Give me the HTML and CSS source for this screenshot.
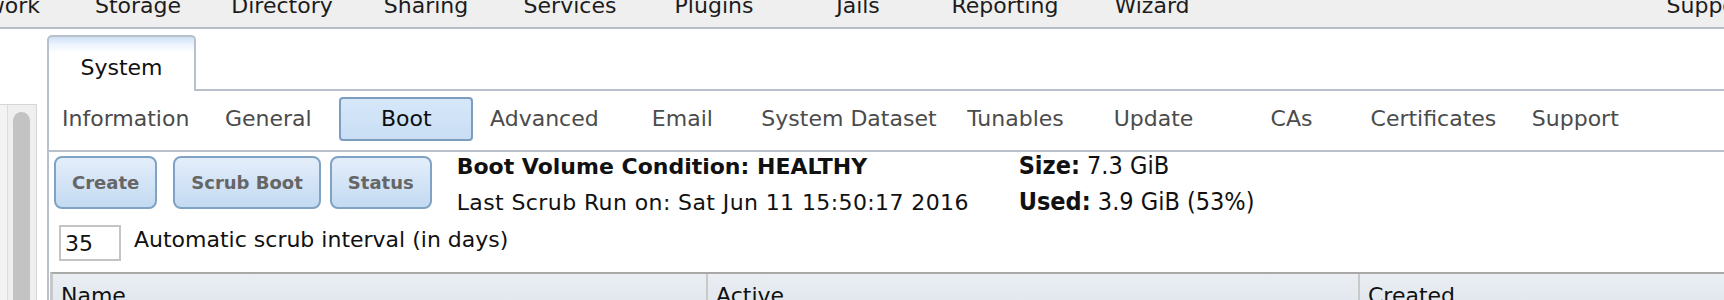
FILE: index.html
```html
<!DOCTYPE html>
<html>
<head>
<meta charset="utf-8">
<title>System - Boot</title>
<link rel="stylesheet" href="styles.css">
</head>
<body>
<div class="topnav">
  <div class="navitem">Network</div>
  <div class="navitem">Storage</div>
  <div class="navitem">Directory</div>
  <div class="navitem">Sharing</div>
  <div class="navitem">Services</div>
  <div class="navitem">Plugins</div>
  <div class="navitem">Jails</div>
  <div class="navitem wide">Reporting</div>
  <div class="navitem">Wizard</div>
  <div class="navitem navright">Support</div>
</div>
<div class="main">
  <div class="sidebar">
    <div class="track"><div class="thumb"></div></div>
  </div>
  <div class="panel">
    <div class="tabstrip">
      <div class="tab">System</div>
      <div class="tabfill"></div>
    </div>
    <div class="panelbody">
      <div class="subtabs">
        <div class="subtab">Information</div>
        <div class="subtab">General</div>
        <div class="subtab active">Boot</div>
        <div class="subtab">Advanced</div>
        <div class="subtab">Email</div>
        <div class="subtab">System Dataset</div>
        <div class="subtab">Tunables</div>
        <div class="subtab">Update</div>
        <div class="subtab">CAs</div>
        <div class="subtab">Certificates</div>
        <div class="subtab">Support</div>
      </div>
      <div class="actions">
        <button class="btn btn-create">Create</button>
        <button class="btn btn-scrub">Scrub Boot</button>
        <button class="btn btn-status">Status</button>
        <div class="info">
          <div class="info-strong">Boot Volume Condition: HEALTHY</div>
          <div class="info-line">Last Scrub Run on: Sat Jun 11 15:50:17 2016</div>
        </div>
        <div class="usage">
          <div><b>Size:</b> 7.3 GiB</div>
          <div><b>Used:</b> 3.9 GiB (53%)</div>
        </div>
      </div>
      <div class="scrubrow">
        <input class="days" type="text" value="35">
        <span class="scrublabel">Automatic scrub interval (in days)</span>
      </div>
      <div class="grid">
        <div class="cell">Name</div>
        <div class="cell">Active</div>
        <div class="cell last">Created</div>
      </div>
    </div>
  </div>
</div>
</body>
</html>
```
FILE: styles.css
```css
html, body {
  margin: 0;
  padding: 0;
  background: #ffffff;
  overflow: hidden;
}
body {
  font-family: "DejaVu Sans", Verdana, sans-serif;
  font-size: 22px;
  color: #111111;
  width: 1724px;
  height: 300px;
}

/* top navigation */
.topnav {
  display: flex;
  align-items: flex-start;
  height: 27px;
  overflow: hidden;
  background: #efefef;
  border-bottom: 2px solid #b6bdc7;
  margin-left: -78px;
  margin-right: -58px;
}
.navitem {
  flex: 0 0 144px;
  text-align: center;
  line-height: 27px;
  margin-top: -8px;
  color: #1c1c1c;
  white-space: nowrap;
}
.navitem.wide { flex-basis: 150px; }
.navitem.navright { margin-left: auto; }

/* main area */
.main {
  display: flex;
  height: 271px;
  overflow: hidden;
}
.sidebar {
  flex: 0 0 36px;
  margin-top: 75px;
  background: #f3f3f3;
  border-top: 1px solid #d6d6d6;
  border-right: 1px solid #d6d6d6;
  display: flex;
}
.track {
  margin-left: 7px;
  border-left: 1px solid #dcdcdc;
  padding-left: 5px;
  padding-top: 7px;
  background: #efefef;
  flex: 1;
  display: flex;
}
.thumb {
  width: 17px;
  background: #c3c3c3;
  border-radius: 9px 9px 0 0;
}

.panel {
  flex: 1;
  margin-left: 10px;
  margin-top: 6px;
  display: flex;
  flex-direction: column;
  min-width: 0;
}
.tabstrip {
  display: flex;
  height: 56px;
}
.tab {
  box-sizing: border-box;
  width: 149px;
  height: 56px;
  border: 2px solid #b8c0cb;
  border-bottom: none;
  border-radius: 5px 5px 0 0;
  background: linear-gradient(#cfe1f6 0px, #eef5fd 8px, #ffffff 16px);
  text-align: center;
  padding-top: 18px;
  line-height: 26px;
  color: #111111;
}
.tabfill {
  flex: 1;
  border-bottom: 2px solid #b8c0cb;
}
.panelbody {
  flex: 1;
  border-left: 2px solid #b8c0cb;
}

/* sub tabs */
.subtabs {
  box-sizing: border-box;
  height: 61px;
  padding-top: 6px;
  padding-left: 3px;
  display: flex;
  align-items: flex-start;
  border-bottom: 2px solid #b8c0cb;
}
.subtab {
  box-sizing: border-box;
  min-width: 134px;
  height: 44px;
  margin: 0 2px;
  padding: 0 6px;
  border: 2px solid transparent;
  border-radius: 4px;
  line-height: 40px;
  text-align: center;
  color: #4b4b4b;
  white-space: nowrap;
}
.subtab.active {
  border-color: #7d9dc0;
  background: linear-gradient(#d6e7f9, #c9def4);
  color: #0d0d0d;
}

/* action row */
.actions {
  box-sizing: border-box;
  height: 57px;
  display: flex;
  align-items: flex-start;
  padding-top: 4px;
}
.btn {
  box-sizing: border-box;
  height: 53px;
  padding: 0 16px;
  border: 2px solid #7fa2c5;
  border-radius: 8px;
  background: linear-gradient(#e4eefa, #c3daf2);
  font-family: "DejaVu Sans", Verdana, sans-serif;
  font-weight: bold;
  font-size: 18px;
  color: #666666;
  white-space: nowrap;
}
.btn-create { margin-left: 5px; }
.btn-scrub { margin-left: 16px; }
.btn-status { margin-left: 9px; }
.info {
  flex: 0 0 562px;
  margin-left: 25px;
  margin-top: -7px;
  line-height: 36px;
  color: #111111;
  white-space: nowrap;
}
.info-strong { font-weight: bold; }
.info-line { letter-spacing: 0.4px; }
.usage {
  font-family: "DejaVu Sans Condensed", "DejaVu Sans", sans-serif;
  font-stretch: condensed;
  font-size: 25px;
  line-height: 36px;
  margin-top: -8px;
  color: #111111;
  white-space: nowrap;
}

/* scrub interval */
.scrubrow {
  display: flex;
  align-items: flex-start;
  margin-top: 16px;
  padding-left: 10px;
}
.days {
  box-sizing: border-box;
  width: 62px;
  height: 36px;
  margin: 0;
  border: 2px solid #c4c4c4;
  padding: 0 0 0 4px;
  font-family: "DejaVu Sans", Verdana, sans-serif;
  font-size: 22px;
  line-height: 32px;
  color: #111111;
  background: #ffffff;
  outline: none;
}
.scrublabel {
  margin-left: 13px;
  margin-top: 2px;
  color: #111111;
  white-space: nowrap;
}

/* grid header */
.grid {
  margin-top: 11px;
  margin-left: 1px;
  display: grid;
  grid-template-columns: 655px 652px 1fr;
  border-top: 2px solid #a9a9a9;
  border-left: 3px solid #c8c8c8;
  background: linear-gradient(#eaeef3, #dfe5ec);
}
.cell {
  box-sizing: border-box;
  border-right: 2px solid #c9c9c9;
  padding: 9px 8px 6px 8px;
  line-height: 26px;
  color: #111111;
}
.cell.last { border-right: none; }
```
